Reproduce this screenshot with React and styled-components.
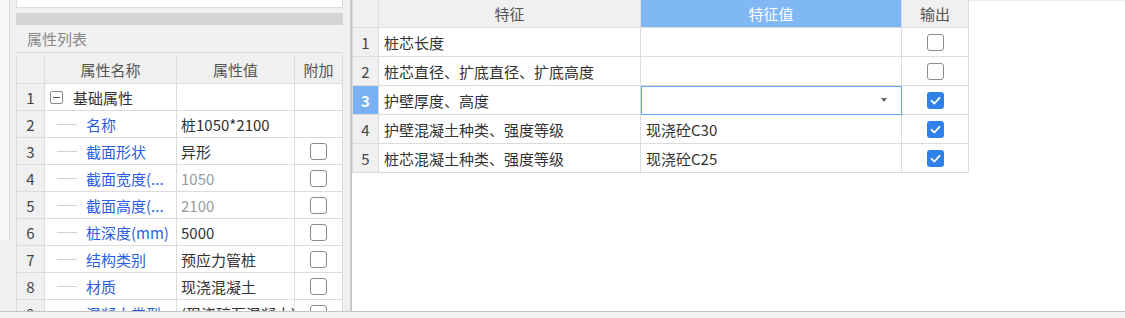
import React from 'react'
import styled, { createGlobalStyle } from 'styled-components'

const GlobalStyle = createGlobalStyle`
  html, body {
    margin: 0;
    padding: 0;
    background: #ffffff;
  }
  * {
    box-sizing: border-box;
  }
`

const FONT = `"Noto Sans CJK SC", "Noto Sans", sans-serif`
const LINE = '#dcdcdc'

const Screen = styled.div`
  width: 1125px;
  height: 318px;
  overflow: hidden;
  display: flex;
  flex-direction: column;
  font-family: ${FONT};
  font-size: 15px;
  color: #333;
  background: #fff;
`

const Main = styled.div`
  height: 311px;
  flex-shrink: 0;
  display: flex;
  overflow: hidden;
`

const StatusBar = styled.div`
  flex: 1;
  border-top: 1px solid #c4c4c4;
  background: #f3f3f3;
`

const LeftStrip = styled.div`
  width: 16px;
  background: #f0f0f0;
  display: flex;
`

const Rail = styled.div`
  width: 10px;
  height: 240px;
  background: #f8f8f8;
  border-right: 1px solid #dadada;
`

const LeftPanel = styled.div`
  width: 327px;
  background: #f0f0f0;
  display: flex;
  flex-direction: column;
  & > * {
    flex-shrink: 0;
  }
`

const TopBox = styled.div`
  height: 8px;
  background: #fff;
  border: 1px solid #dcdcdc;
  border-top: none;
`

const GrayBar = styled.div`
  margin-top: 5px;
  height: 12px;
  background: #d5d5d5;
`

const SectionTitle = styled.div`
  height: 28px;
  line-height: 27px;
  padding-left: 11px;
  color: #8a8a8a;
  background: #f1f1f1;
  border-bottom: 1px solid #d6d6d6;
`

const Grid = styled.div`
  display: grid;
  grid-template-columns: ${p => p.$cols};
  grid-auto-rows: ${p => p.$row}px;
  border-left: 1px solid ${LINE};
  background: #fff;
`

const LeftGrid = styled(Grid)`
  margin-top: 2px;
  grid-template-rows: 29px;
`

const Cell = styled.div`
  border-right: 1px solid ${LINE};
  border-bottom: 1px solid ${LINE};
  display: flex;
  align-items: center;
  padding-left: ${p => p.$pad || 4}px;
  white-space: nowrap;
  overflow: hidden;
  color: ${p => p.$color || '#333'};
  position: relative;
`

const HeadCell = styled(Cell)`
  justify-content: center;
  padding-left: 0;
  background: ${p => (p.$active ? '#80b8f6' : '#f0f0f0')};
  color: ${p => (p.$active ? '#fff' : '#555')};
`

const NumCell = styled(Cell)`
  justify-content: center;
  padding-left: 0;
  background: ${p => (p.$active ? '#78b2f5' : '#f0f0f0')};
  color: ${p => (p.$active ? '#fff' : '#444')};
  font-weight: ${p => (p.$active ? 700 : 400)};
`

const CheckCell = styled(Cell)`
  justify-content: center;
  padding-left: 0;
`

const EditCell = styled(Cell)`
  outline: 1px solid #62a6f2;
  outline-offset: -1px;
  justify-content: flex-end;
  padding-right: 14px;
  z-index: 1;
`

const Caret = styled.span`
  width: 0;
  height: 0;
  border-left: 3.5px solid transparent;
  border-right: 3.5px solid transparent;
  border-top: 4px solid #666;
`

const Box = styled.span`
  width: 17px;
  height: 17px;
  border-radius: 3px;
  border: ${p => (p.$checked ? 'none' : '1.5px solid #8c8c8c')};
  background: ${p => (p.$checked ? '#2f80e9' : '#fff')};
  display: flex;
  align-items: center;
  justify-content: center;
`

const TreeName = styled.span`
  display: flex;
  align-items: center;
  color: #2c5fe0;
`

const TreeLine = styled.span`
  width: 20px;
  height: 1px;
  background: #d2d2d2;
  margin-right: 9px;
`

const Toggle = styled.span`
  width: 13px;
  height: 13px;
  border: 1px solid #8a8a8a;
  border-radius: 2px;
  margin-right: 10px;
  display: flex;
  align-items: center;
  justify-content: center;
  &::after {
    content: '';
    width: 7px;
    height: 1px;
    background: #555;
  }
`

const Splitter = styled.div`
  width: 9px;
  background: #f0f0f0;
  border-right: 2px solid #c9c9c9;
`

const RightPanel = styled.div`
  flex: 1;
  background: #fff;
  border-top: 1px solid #ececec;
`

const RightGrid = styled(Grid)`
  width: 616px;
  margin-top: -1px;
  grid-template-rows: 28px;
`

const Checkbox = ({ checked }) => (
  <Box $checked={checked}>
    {checked && (
      <svg width='13' height='13' viewBox='0 0 13 13'>
        <polyline points='2.5,6.8 5.4,9.5 10.5,3.8' fill='none' stroke='#fff' strokeWidth='1.8' strokeLinecap='round' strokeLinejoin='round' />
      </svg>
    )}
  </Box>
)

const props = [
  { name: '名称', value: '桩1050*2100', noCheck: true },
  { name: '截面形状', value: '异形' },
  { name: '截面宽度(...', value: '1050', muted: true },
  { name: '截面高度(...', value: '2100', muted: true },
  { name: '桩深度(mm)', value: '5000' },
  { name: '结构类别', value: '预应力管桩' },
  { name: '材质', value: '现浇混凝土' },
  { name: '混凝土类型', value: '(现浇碎石混凝土)' }
]

const features = [
  { name: '桩芯长度', value: '', out: false },
  { name: '桩芯直径、扩底直径、扩底高度', value: '', out: false },
  { name: '护壁厚度、高度', value: '', out: true, editing: true },
  { name: '护壁混凝土种类、强度等级', value: '现浇砼C30', out: true },
  { name: '桩芯混凝土种类、强度等级', value: '现浇砼C25', out: true }
]

export default function App () {
  return (
    <Screen>
      <GlobalStyle />
      <Main>
        <LeftStrip>
          <Rail />
        </LeftStrip>
        <LeftPanel>
          <TopBox />
          <GrayBar />
          <SectionTitle>属性列表</SectionTitle>
          <LeftGrid $cols='28px 132px 118px 48px' $row={27}>
            <HeadCell />
            <HeadCell>属性名称</HeadCell>
            <HeadCell>属性值</HeadCell>
            <HeadCell>附加</HeadCell>

            <NumCell>1</NumCell>
            <Cell $pad={5}>
              <Toggle />
              基础属性
            </Cell>
            <Cell />
            <Cell />

            {props.map((p, i) => (
              <React.Fragment key={p.name}>
                <NumCell>{i + 2}</NumCell>
                <Cell $pad={12}>
                  <TreeName>
                    <TreeLine />
                    {p.name}
                  </TreeName>
                </Cell>
                <Cell $color={p.muted ? '#9a9a9a' : '#333'}>{p.value}</Cell>
                <CheckCell>{!p.noCheck && <Checkbox />}</CheckCell>
              </React.Fragment>
            ))}
          </LeftGrid>
        </LeftPanel>
        <Splitter />
        <RightPanel>
          <RightGrid $cols='26px 262px 261px 67px' $row={29}>
            <HeadCell />
            <HeadCell>特征</HeadCell>
            <HeadCell $active>特征值</HeadCell>
            <HeadCell>输出</HeadCell>

            {features.map((f, i) => (
              <React.Fragment key={f.name}>
                <NumCell $active={f.editing}>{i + 1}</NumCell>
                <Cell $pad={5}>{f.name}</Cell>
                {f.editing
                  ? <EditCell><Caret /></EditCell>
                  : <Cell $pad={5}>{f.value}</Cell>}
                <CheckCell>
                  <Checkbox checked={f.out} />
                </CheckCell>
              </React.Fragment>
            ))}
          </RightGrid>
        </RightPanel>
      </Main>
      <StatusBar />
    </Screen>
  )
}
